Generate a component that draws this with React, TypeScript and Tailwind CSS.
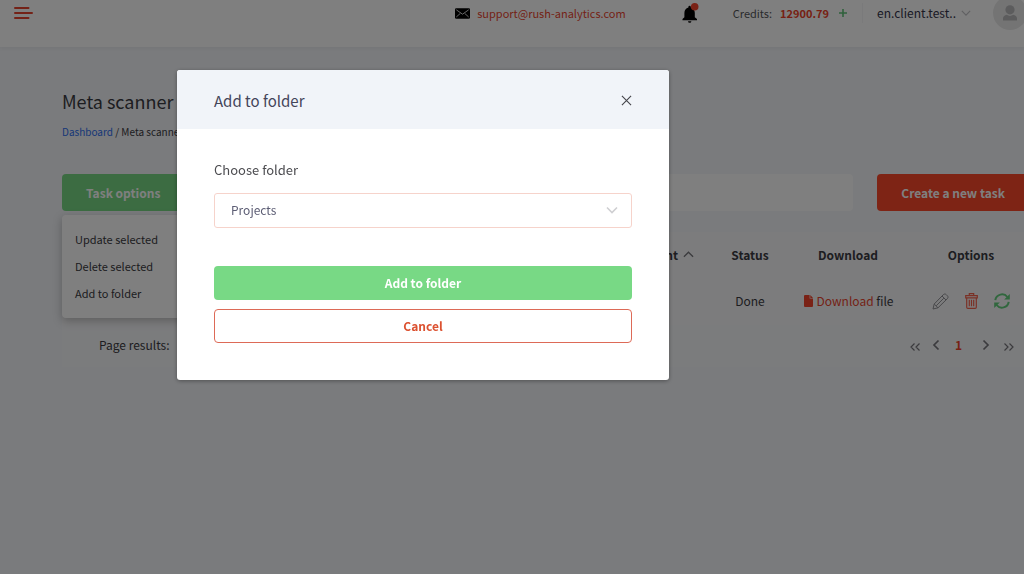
import { useState } from "react";

const menuItems = ["Update selected", "Delete selected", "Add to folder"];

function Chevron({ className, d }: { className: string; d: string }) {
  return (
    <svg viewBox="0 0 12 12" className={className} fill="none" stroke="currentColor" aria-hidden="true">
      <path d={d} />
    </svg>
  );
}

function Header() {
  return (
    <header className="flex h-[47px] items-center bg-white pb-[21px] pl-3.5 text-[11px] leading-4 shadow-[0_1px_4px_rgba(0,0,0,0.06)]">
      <button type="button" aria-label="Menu" className="text-[#e8452f]">
        <svg viewBox="0 0 19 12" className="h-3 w-[19px]" stroke="currentColor" strokeWidth="2" strokeLinecap="round" aria-hidden="true">
          <path d="M1 1h13.500M1 6h17M1 11h13.500" />
        </svg>
      </button>
      <div className="-mr-[3px] ml-auto flex items-center">
        <svg viewBox="0 0 15 11" className="mr-[7px] h-[11px] w-[15px]" aria-hidden="true">
          <rect width="15" height="10.500" y=".2" rx="1.300" fill="#000" />
          <path d="M1.300 1.800l6.200 4.400 6.200-4.400M1.300 9l4-3.600M13.700 9l-4-3.600" fill="none" stroke="#fff" strokeWidth=".8" />
        </svg>
        <a href="mailto:support@rush-analytics.com" className="mr-14 text-[#ea452e]">
          support@rush-analytics.com
        </a>
        <button type="button" aria-label="Notifications" className="mr-[34px]">
          <svg viewBox="0 0 17 20" className="h-5 w-[17px]" aria-hidden="true">
            <path d="M.5 17.200v-1.200l1.900-1.800V10c0-2.800 1.500-4.800 4-5.400V4a1.200 1.200 0 0 1 2.400 0v.6c2.500.6 4 2.600 4 5.400v4.200l2.200 1.800v1.200z" fill="#000" />
            <path d="M6 18.300h3.400a1.700 1.500 0 0 1-3.400 0z" fill="#000" />
            <circle cx="12.700" cy="3.800" r="3.800" fill="#f5442c" />
          </svg>
        </button>
        <span className="mr-2 text-[#55565a]">Credits:</span>
        <b className="mr-2.5 text-[#ee4228]">12900.79</b>
        <button type="button" aria-label="Add credits" className="mr-[15px] text-[#5fc278]">
          <svg viewBox="0 0 8 8" className="size-2" stroke="currentColor" strokeWidth="1.600" aria-hidden="true">
            <path d="M4 0v8M0 4h8" />
          </svg>
        </button>
        <span className="mr-3.5 h-5 w-px bg-[#f4f4f6]" />
        <button type="button" className="mr-[22px] flex items-center gap-[5px] text-[12px] text-[#34344a]">
          en.client.test..
          <Chevron className="size-2.5 stroke-[1.500] text-[#c2c2c6]" d="M1 3.500l5 5 5-5" />
        </button>
        <span className="grid size-[34px] place-items-center rounded-full bg-[#e9e9e9] text-[#b8b8ba]">
          <svg viewBox="0 0 14 16" className="h-4 w-3.5" fill="currentColor" aria-hidden="true">
            <circle cx="7" cy="4.800" r="4.600" />
            <path d="M0 15.500v-2c0-2 1.800-3.200 3.700-3.700a6 6 0 0 0 6.600 0c1.900.5 3.700 1.700 3.700 3.700v2z" />
          </svg>
        </span>
      </div>
    </header>
  );
}

function Toolbar() {
  return (
    <div className="flex h-[37px] items-stretch">
      <div className="relative flex">
        <button type="button" className="flex w-40 items-center rounded bg-[#78d985] px-6 text-[12px] font-bold text-white">
          Task options
        </button>
        <ul className="absolute top-[41px] left-0 w-40 rounded bg-white px-[13px] py-[11px] text-[11px] shadow-[0_3px_10px_rgba(0,0,0,0.25)]">
          {menuItems.map((item) => (
            <li key={item}>
              <button type="button" className="block leading-[27px]">{item}</button>
            </li>
          ))}
        </ul>
      </div>
      <input aria-label="Search" className="mr-6 ml-6 min-w-0 flex-1 rounded bg-white px-4" />
      <button type="button" className="rounded bg-[#fc482b] px-6 text-[12px] font-bold text-white">
        Create a new task
      </button>
    </div>
  );
}

function TaskTable() {
  return (
    <table className="w-full table-fixed bg-[#f9f9fb] text-[12px]">
      <thead>
        <tr className="h-[45px]">
          <th />
          <th className="w-[120px] pr-[15px] text-right">
            <span className="inline-flex items-center gap-[5px]">
              Count
              <Chevron className="size-[11px] stroke-[1.500] text-[#77777c]" d="M1 8.500l5-5 5 5" />
            </span>
          </th>
          <th className="w-[82px]">Status</th>
          <th className="w-[114px]">Download</th>
          <th className="w-[124px] pl-2">Options</th>
        </tr>
      </thead>
      <tbody>
        <tr className="h-12 text-center">
          <td />
          <td />
          <td>Done</td>
          <td className="pl-0.5">
            <a href="#download" className="inline-flex items-center gap-[3px] whitespace-nowrap">
              <svg viewBox="0 0 9 12" className="h-3 w-[9px]" aria-hidden="true">
                <path d="M1 0h4.600v3.600H9V11a1 1 0 0 1-1 1H1a1 1 0 0 1-1-1V1a1 1 0 0 1 1-1zM6.300 0L9 2.900H6.300z" fill="#f5442c" />
              </svg>
              <span><span className="text-[#ea452e]">Download</span> file</span>
            </a>
          </td>
          <td className="pl-2">
            <div className="flex items-center justify-center gap-4">
              <button type="button" aria-label="Edit">
                <svg viewBox="0 0 17 17" className="size-[17px]" fill="none" stroke="#919196" strokeWidth="1" strokeLinejoin="round" aria-hidden="true">
                  <path d="M1 16l1.200-5L11.300 1.700c1-1 2.200-.9 3 0l1 1c.9.800 1 2 0 3L6 14.800zM2.200 11L6 14.800M10 3l4 4M4.200 12.800L11.800 5.200" />
                </svg>
              </button>
              <button type="button" aria-label="Delete">
                <svg viewBox="0 0 13 16" className="h-4 w-[13px]" fill="none" stroke="#f5624c" strokeWidth="1.200" aria-hidden="true">
                  <path d="M.7 2.600h11.600v2.300H.7zM4.300 2.500V.7h4.400v1.800M1.700 5v9.200c0 .8.4 1.200 1.200 1.200h7.200c.8 0 1.200-.4 1.200-1.200V5M4.300 6.800v6.400M6.500 6.800v6.400M8.700 6.800v6.400" />
                </svg>
              </button>
              <button type="button" aria-label="Refresh">
                <svg viewBox="0 0 16 16" className="size-4" fill="none" stroke="#62cf7c" strokeWidth="2" aria-hidden="true">
                  <path d="M1.300 7.200A6.800 6.800 0 0 1 13.400 4M14.700 8.800A6.800 6.800 0 0 1 2.600 12" />
                  <path d="M15.800 1v5.600h-5.600zM.2 15V9.400h5.600z" fill="#62cf7c" stroke="none" />
                </svg>
              </button>
            </div>
          </td>
        </tr>
      </tbody>
    </table>
  );
}

function Pagination() {
  return (
    <div className="flex h-[42px] items-center bg-[#f7f8fb] pr-3.5 pb-0.5 pl-[37px] text-[12px]">
      <span>Page results:</span>
      <nav aria-label="Pages" className="ml-auto flex items-center text-[#77777c]">
        <button type="button" aria-label="First page" className="mr-[9px] pt-[3px]">
          <Chevron className="size-3 stroke-[1.200]" d="M5.500 2.500L2 6l3.500 3.500M10.500 2.500L7 6l3.500 3.500" />
        </button>
        <button type="button" aria-label="Previous page" className="mr-[13px]">
          <Chevron className="size-3 stroke-[1.700]" d="M8.500 1.500L4 6l4.500 4.500" />
        </button>
        <b className="mr-[18px] text-[#ee4228]">1</b>
        <button type="button" aria-label="Next page" className="mr-[11px]">
          <Chevron className="size-3 stroke-[1.700]" d="M3.500 1.500L8 6l-4.500 4.500" />
        </button>
        <button type="button" aria-label="Last page" className="pt-[3px]">
          <Chevron className="size-3 stroke-[1.200]" d="M1.500 2.500L5 6 1.500 9.500M6.500 2.500L10 6l-3.500 3.500" />
        </button>
      </nav>
    </div>
  );
}

function FolderDialog() {
  const [folder, setFolder] = useState("Projects");
  return (
    <div className="fixed inset-0 flex items-start justify-center bg-black/50 pt-[70px] pr-[178px]">
      <section role="dialog" aria-modal="true" aria-labelledby="dialog-title" className="w-full max-w-[492px] overflow-hidden rounded-[3px] bg-white shadow-[0_1px_4px_rgba(0,0,0,0.35)]">
        <div className="flex h-[59px] items-center justify-between bg-[#f1f4f9] px-[37px] pt-0.5">
          <h2 id="dialog-title" className="text-[15px] leading-5 text-[#44455a]">Add to folder</h2>
          <button type="button" aria-label="Close">
            <Chevron className="size-[11px] stroke-[1.200] text-[#44444a]" d="M1 1l10 10M11 1L1 11" />
          </button>
        </div>
        <div className="flex flex-col px-[37px] pt-[31px] pb-[37px]">
          <label htmlFor="folder" className="mb-[13px] text-[13px] leading-5 text-[#4c4c50]">Choose folder</label>
          <div className="relative mb-[38px]">
            <select
              id="folder"
              value={folder}
              onChange={(event) => setFolder(event.target.value)}
              className="block h-[35px] w-full appearance-none rounded-[3px] border border-[#f6d3cb] bg-white px-4 pb-0.5 text-[12px] text-[#5c5d74]"
            >
              <option>Projects</option>
            </select>
            <Chevron className="pointer-events-none absolute top-[11px] right-3.5 size-3 stroke-[1.600] text-[#cfcfd2]" d="M1 3.500l5 5 5-5" />
          </div>
          <button type="button" className="mb-[9px] h-[34px] rounded bg-[#78d985] text-[12px] font-bold text-white">Add to folder</button>
          <button type="button" className="h-[34px] rounded border border-[#dd6a57] text-[12px] font-bold text-[#dc5130]">Cancel</button>
        </div>
      </section>
    </div>
  );
}

export default function App() {
  return (
    <div className="min-h-screen overflow-hidden bg-[#f4f6fa] font-['Noto_Sans_CJK_SC','Noto_Sans',sans-serif] text-[#3b3b42]">
      <Header />
      <main className="-mr-[5px] pt-10 pl-[62px]">
        <h1 className="text-[18px] leading-7">Meta scanner - All</h1>
        <p className="mt-[9px] mb-[34px] text-[10px] leading-4">
          <a href="#dashboard" className="text-[#2f6ff0]">Dashboard</a> / Meta scanner
        </p>
        <Toolbar />
        <div className="mt-[21px]">
          <TaskTable />
          <Pagination />
        </div>
      </main>
      <FolderDialog />
    </div>
  );
}
